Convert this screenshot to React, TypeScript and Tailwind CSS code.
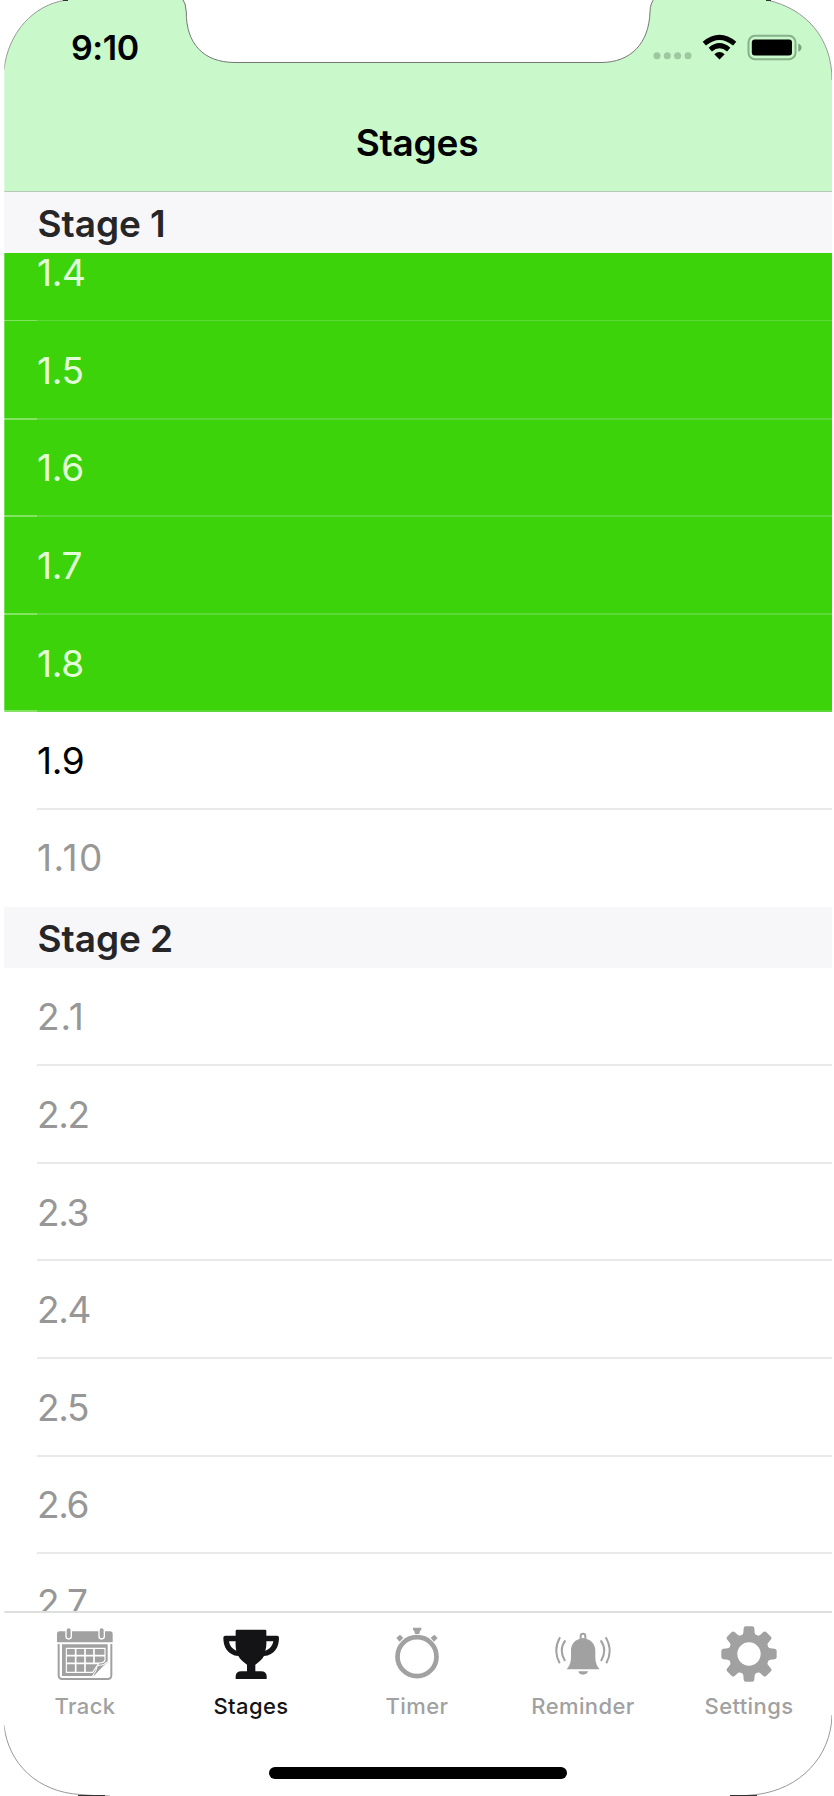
import type { ReactNode } from "react";

type Status = "done" | "current" | "locked";

const rowTone: Record<Status, string> = {
  done: "bg-[#3dd30b] text-[#e2ffda]",
  current: "bg-white text-black",
  locked: "bg-white text-[#979797]",
};

function labelTracking(label: string) {
  if (label === "1.10") return "tracking-[1.5px]";
  if (label === "2.1") return "tracking-[0.9px]";
  return label.startsWith("1.") ? "tracking-[-0.3px]" : "tracking-[-1.4px]";
}

function Row({ label, status, line = true }: { label: string; status: Status; line?: boolean }) {
  return (
    <li className={`flex h-[97.6px] shrink-0 flex-col ${rowTone[status]}`}>
      <div className={`flex flex-1 items-center pl-[33px] text-[37px] leading-none ${labelTracking(label)}`}>
        <span className={line ? "relative top-[1.5px]" : "relative top-0"}>{label}</span>
      </div>
      {line && (
        <div className="relative top-px flex h-[2px]">
          <div className={status === "done" ? "w-[33px] bg-[#83e462]" : "w-[33px]"} />
          <div className={status === "done" ? "flex-1 bg-[#5bd936]" : "flex-1 bg-[#e9e9ea]"} />
        </div>
      )}
    </li>
  );
}

function SectionHeader({ title }: { title: string }) {
  return (
    <h2 className="flex h-[61px] shrink-0 items-center bg-[#f7f7fa] pl-[33.5px] text-[37px] leading-none font-semibold tracking-[-0.05px] text-[#262628]">
      <span className="relative top-px">{title}</span>
    </h2>
  );
}

function CalendarIcon() {
  return (
    <svg viewBox="0 0 168 168" className="size-14" fill="currentColor">
      <path d="M0 49V24q0-8 8-8h151q8 0 8 8v25z" />
      <g stroke="#fff" strokeWidth="4">
        <rect x="27" y="5" width="16" height="34" rx="8" />
        <rect x="126" y="5" width="16" height="34" rx="8" />
      </g>
      <path d="M5 54V148q0 11 11 11H152q11 0 11-11V54" fill="none" stroke="currentColor" strokeWidth="6" />
      <path d="M15 55H152V109L112 150H15z" />
      <path d="M28 67H144V103Q142 110 126 111Q117 124 107 139H28z" fill="none" stroke="#fff" strokeWidth="3.5" />
      <path d="M28 89H144M28 112H126M56 67V139M84 67V139M111 67V112" fill="none" stroke="#fff" strokeWidth="5" />
      <path d="M107 150Q119 134 121 119Q141 119 152 107L113 149z" stroke="#fff" strokeWidth="3" />
    </svg>
  );
}

function TrophyIcon() {
  return (
    <svg viewBox="0 0 168 168" className="size-14" fill="currentColor">
      <path
        fillRule="evenodd"
        d="M42 11h84q4 0 4 4v14h32q6 0 6 6c0 28-13 52-45 55-6 12-18 20-26 26v20h17q16 0 17 14v9H38v-9q1-14 17-14h17v-20c-8-6-20-14-26-26C14 87 1 63 1 35q0-6 6-6h31V15q0-4 4-4zM18 46c2 14 9 23 22 28q-3-12-2-28zM130 46q1 16-3 28c14-5 21-14 24-28z"
      />
    </svg>
  );
}

function StopwatchIcon() {
  return (
    <svg viewBox="0 0 168 168" className="size-14" fill="currentColor">
      <circle cx="84" cy="92" r="58.5" fill="none" stroke="currentColor" strokeWidth="14" />
      <path d="M72 5h25v7l-4 3-2 9H78l-2-9-4-3zM33 26l10 9-11 12-10-11zM136 26l10 10-11 11-10-12z" />
    </svg>
  );
}

function BellIcon() {
  return (
    <svg viewBox="0 0 168 168" className="size-14" fill="currentColor">
      <path d="M35 130c10-12 13-21 13-40V73c0-20 14-34 36-37 22 3 37 17 37 37v17c0 19 3 28 13 40zM70 136h29q-3 10-15 10t-14-10z" />
      <g fill="none" stroke="currentColor" strokeWidth="6">
        <path d="M77 39v-9q0-7 7-7t7 7v9" />
        <path d="M31 43Q10 72 30 105M15 34Q-7 73 14 112M137 43Q158 72 138 105M152 34Q175 73 154 112" />
      </g>
    </svg>
  );
}

const teeth = [0, 45, 90, 135, 180, 225, 270, 315];

function GearIcon() {
  return (
    <svg viewBox="0 0 168 168" className="size-14" fill="currentColor">
      <circle cx="84" cy="84" r="48" fill="none" stroke="currentColor" strokeWidth="26" />
      {teeth.map((angle) => (
        <path
          key={angle}
          transform={`rotate(${angle} 84 84)`}
          d="M60 29q6-3 7-9l1-13q1-6 6-6h20q5 0 6 6l1 13q1 6 7 9l-8 14H68z"
        />
      ))}
    </svg>
  );
}

function Tab({ label, icon, active = false }: { label: string; icon: ReactNode; active?: boolean }) {
  return (
    <button
      className={`flex w-1/5 flex-col items-center pt-[13px] ${active ? "text-[#141416]" : "text-[#a1a1a1]"}`}
    >
      {icon}
      <span className="mt-[9px] text-[22px] leading-[30px] font-medium tracking-[0.4px]">{label}</span>
    </button>
  );
}

function StatusIcons() {
  return (
    <svg viewBox="0 0 150 30" className="h-[30px] w-[150px] overflow-visible">
      <g fill="#9fc7a0">
        <circle cx="7" cy="23.8" r="3.5" />
        <circle cx="17.3" cy="23.8" r="3.5" />
        <circle cx="27.6" cy="23.8" r="3.5" />
        <circle cx="38" cy="23.8" r="3.5" />
      </g>
      <g fill="none" stroke="#000" strokeWidth="5">
        <path d="M54.3 11.6Q69.5-1 84.7 11.6" />
        <path d="M60.3 17.6Q69.5 9.8 78.7 17.6" />
      </g>
      <path d="M64.3 22.2Q69.5 18 74.7 22.2L69.5 27.5z" />
      <rect x="98.5" y="3.8" width="47" height="23.4" rx="6.5" fill="none" stroke="#86b18a" strokeWidth="2" />
      <rect x="101.8" y="7.4" width="40.2" height="16.2" rx="3" />
      <path d="M148.3 11.4v8.4q3.2-1.2 3.2-4.2t-3.2-4.2z" fill="#78a67c" />
    </svg>
  );
}

function DeviceOutline() {
  return (
    <svg viewBox="0 0 834 1796" className="pointer-events-none absolute inset-0 h-[1796px] w-[834px]">
      <g fill="#fff" stroke="#999" strokeWidth="1">
        <path d="M-2-2H65V.3C34 5 8 32 4 70H-2z" />
        <path d="M768-2V.3C806 9 832 38 832 80H836V-2z" />
        <path d="M-2 1725H4C8 1764 38 1792 80 1794.5Q95 1796 110 1796V1799H-2z" />
        <path d="M836 1715H832C831 1757 800 1789 757 1794.5Q745 1796 730 1796V1799H836z" />
        <path
          d="M182-2Q186 3 186.3 12C186 43 203 62.5 235 62.5H601C631 62.5 649 43 650 12Q650 3 655-2z"
          stroke="#777"
        />
      </g>
      <path d="M63 .5H68M766 .5H771M78 1795.5H105M730 1795.5H757" stroke="#333" />
      <path d="M0 0H4.3V1796H0zM832 0H834V1796H832z" fill="#fff" />
    </svg>
  );
}

const done = ["1.5", "1.6", "1.7", "1.8"];
const locked = ["2.1", "2.2", "2.3", "2.4", "2.5", "2.6", "2.7"];

export default function App() {
  return (
    <div className="relative h-[1796px] w-[834px] overflow-hidden bg-white font-['Inter','Liberation_Sans',sans-serif]">
      <div className="ml-[4px] flex h-[1796px] w-[828px] flex-col">
        <header className="flex h-[192px] shrink-0 flex-col border-b border-[#b5c8b7] bg-[#c9f8ca]">
          <div className="flex h-[94px] items-start justify-between pt-[32px] pr-[32px] pl-[67px]">
            <time className="text-[34px] leading-[32px] font-semibold tracking-[-0.4px]">9:10</time>
            <StatusIcons />
          </div>
          <h1 className="flex h-[98px] items-center justify-center pr-[2px] text-[37px] leading-none font-semibold tracking-[-0.2px]">
            Stages
          </h1>
        </header>
        <main className="flex min-h-0 flex-1 flex-col overflow-hidden">
          <SectionHeader title="Stage 1" />
          <ul className="flex h-[68px] shrink-0 flex-col justify-end overflow-y-clip">
            <Row label="1.4" status="done" />
          </ul>
          <ul className="shrink-0">
            {done.map((label) => (
              <Row key={label} label={label} status="done" />
            ))}
            <Row label="1.9" status="current" />
            <Row label="1.10" status="locked" line={false} />
          </ul>
          <SectionHeader title="Stage 2" />
          <ul className="shrink-0">
            {locked.map((label) => (
              <Row key={label} label={label} status="locked" />
            ))}
          </ul>
        </main>
        <footer className="flex h-[185px] shrink-0 flex-col items-center border-t-2 border-[#dedede] bg-white">
          <nav className="flex h-[154px] w-[832px] shrink-0 items-start pr-[2px]">
            <Tab label="Track" icon={<CalendarIcon />} />
            <Tab label="Stages" icon={<TrophyIcon />} active />
            <Tab label="Timer" icon={<StopwatchIcon />} />
            <Tab label="Reminder" icon={<BellIcon />} />
            <Tab label="Settings" icon={<GearIcon />} />
          </nav>
          <div className="mr-px h-[12px] w-[298px] rounded-full bg-black" />
        </footer>
      </div>
      <DeviceOutline />
    </div>
  );
}
